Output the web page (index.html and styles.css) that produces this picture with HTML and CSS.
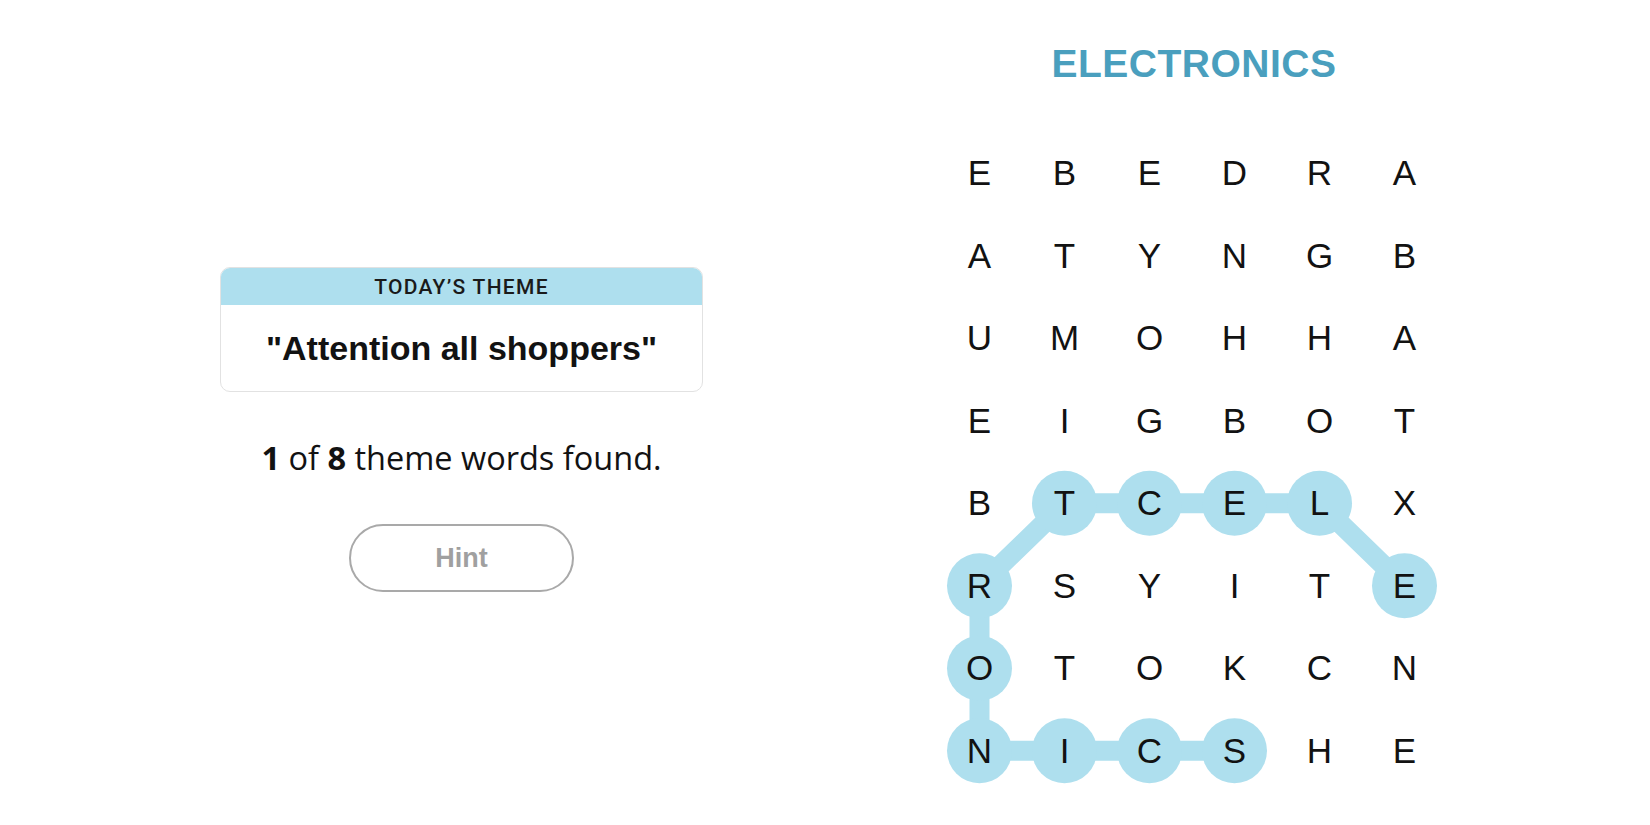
FILE: index.html
```html
<!DOCTYPE html>
<html lang="en">
<head>
<meta charset="utf-8">
<title>Strands</title>
<link rel="stylesheet" href="styles.css">
</head>
<body>
<main class="page">
  <section class="left">
    <div class="theme-card">
      <div class="theme-head">TODAY’S THEME</div>
      <div class="theme-body">"Attention all shoppers"</div>
    </div>
    <p class="count"><b>1</b> of <b>8</b> theme words found.</p>
    <button class="hint" type="button">Hint</button>
  </section>
  <section class="right">
    <h1 class="found-word">ELECTRONICS</h1>
    <div class="board">
      <svg class="path" width="510" height="660" viewBox="0 0 510 660" aria-hidden="true">
        <polyline points="467.5,453.75 382.5,371.25 297.5,371.25 212.5,371.25 127.5,371.25 42.5,453.75 42.5,536.25 42.5,618.75 127.5,618.75 212.5,618.75 297.5,618.75" fill="none" stroke="#aedfee" stroke-width="20" stroke-linejoin="round" stroke-linecap="round"/>
        <g fill="#aedfee">
          <circle cx="467.5" cy="453.75" r="32.5"/>
          <circle cx="382.5" cy="371.25" r="32.5"/>
          <circle cx="297.5" cy="371.25" r="32.5"/>
          <circle cx="212.5" cy="371.25" r="32.5"/>
          <circle cx="127.5" cy="371.25" r="32.5"/>
          <circle cx="42.5" cy="453.75" r="32.5"/>
          <circle cx="42.5" cy="536.25" r="32.5"/>
          <circle cx="42.5" cy="618.75" r="32.5"/>
          <circle cx="127.5" cy="618.75" r="32.5"/>
          <circle cx="212.5" cy="618.75" r="32.5"/>
          <circle cx="297.5" cy="618.75" r="32.5"/>
        </g>
      </svg>
      <span class="cell">E</span><span class="cell">B</span><span class="cell">E</span><span class="cell">D</span><span class="cell">R</span><span class="cell">A</span>
      <span class="cell">A</span><span class="cell">T</span><span class="cell">Y</span><span class="cell">N</span><span class="cell">G</span><span class="cell">B</span>
      <span class="cell">U</span><span class="cell">M</span><span class="cell">O</span><span class="cell">H</span><span class="cell">H</span><span class="cell">A</span>
      <span class="cell">E</span><span class="cell">I</span><span class="cell">G</span><span class="cell">B</span><span class="cell">O</span><span class="cell">T</span>
      <span class="cell">B</span><span class="cell">T</span><span class="cell">C</span><span class="cell">E</span><span class="cell">L</span><span class="cell">X</span>
      <span class="cell">R</span><span class="cell">S</span><span class="cell">Y</span><span class="cell">I</span><span class="cell">T</span><span class="cell">E</span>
      <span class="cell">O</span><span class="cell">T</span><span class="cell">O</span><span class="cell">K</span><span class="cell">C</span><span class="cell">N</span>
      <span class="cell">N</span><span class="cell">I</span><span class="cell">C</span><span class="cell">S</span><span class="cell">H</span><span class="cell">E</span>
    </div>
  </section>
</main>
</body>
</html>
```
FILE: styles.css
```css
* { box-sizing: border-box; }

html, body {
  margin: 0;
  padding: 0;
  background: #ffffff;
}

body {
  font-family: "Liberation Sans", Arial, sans-serif;
  color: #121212;
}

.page {
  display: flex;
  width: 1650px;
  height: 825px;
  overflow: hidden;
}

.left {
  width: 922px;
  flex: none;
  display: flex;
  flex-direction: column;
  align-items: center;
  padding-top: 267px;
  padding-left: 1px;
}

.theme-card {
  width: 483px;
  border: 1px solid #e2e2e2;
  border-radius: 10px;
  overflow: hidden;
  background: #fff;
}

.theme-head {
  height: 37px;
  background: #aedfee;
  display: flex;
  align-items: center;
  justify-content: center;
  font-family: Roboto, "Liberation Sans", sans-serif;
  font-size: 21px;
  font-weight: 500;
  letter-spacing: 1.3px;
  color: #1a1a1a;
  padding-top: 1px;
}

.theme-body {
  height: 86px;
  display: flex;
  align-items: center;
  justify-content: center;
  font-size: 34px;
  font-weight: 700;
  color: #121212;
}

.count {
  margin: 47px 0 0;
  font-family: "Open Sans", "Liberation Sans", sans-serif;
  font-size: 32.5px;
  line-height: 38px;
  color: #121212;
}

.count b {
  font-weight: 700;
}

.hint {
  margin-top: 47px;
  width: 225px;
  height: 68px;
  border: 2px solid #a9a9a9;
  border-radius: 34px;
  background: #fff;
  font-family: "Liberation Sans", Arial, sans-serif;
  font-size: 27px;
  font-weight: 700;
  color: #a0a0a0;
  padding: 0;
}

.right {
  flex: none;
  width: 510px;
  margin-left: 15px;
  display: flex;
  flex-direction: column;
}

.found-word {
  margin: 41px 0 0;
  height: 46px;
  line-height: 46px;
  font-size: 39px;
  font-weight: 700;
  letter-spacing: 0.5px;
  text-align: center;
  color: #4a9fbe;
  padding-left: 4px;
}

.board {
  position: relative;
  margin-top: 45px;
  width: 510px;
  display: grid;
  grid-template-columns: repeat(6, 85px);
  grid-auto-rows: 82.5px;
}

.path {
  position: absolute;
  left: 0;
  top: 0;
}

.cell {
  position: relative;
  display: flex;
  align-items: center;
  justify-content: center;
  font-size: 35px;
  color: #121212;
}
```
